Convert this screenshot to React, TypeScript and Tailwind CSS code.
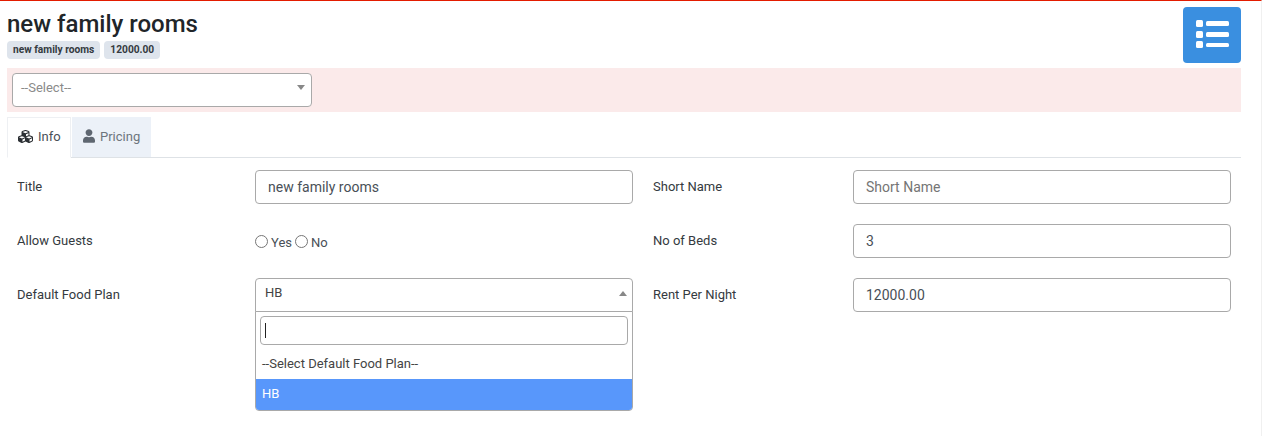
import { FaCubes, FaUser } from "react-icons/fa";

function Field({ label, labelW, value, placeholder }: { label: string; labelW: string; value?: string; placeholder?: string }) {
  return (
    <div className="flex items-center">
      <div className={`${labelW} text-[13px] text-[#343a40]`}>{label}</div>
      <input
        readOnly
        value={value ?? ""}
        placeholder={placeholder}
        className="w-[378px] h-[34px] border border-[#a9a9a9] rounded-[4px] px-3 text-[14px] text-[#495057] bg-white outline-none placeholder:text-[#757575]"
      />
    </div>
  );
}

export default function App() {
  return (
    <div className="w-[1262px] h-[436px] overflow-hidden bg-white border-t border-t-[#e31c00] border-r border-r-[#f0f0f0] font-['Roboto',sans-serif] text-[#212529]">
      <div className="pl-[7px] pr-[20px] pt-[6px]">
        <div className="flex justify-between h-[61px]">
          <div>
            <div className="text-[24px] leading-[34px] font-medium text-[#212529]">new family rooms</div>
            <div className="flex gap-[4px] mt-0">
              <span className="h-[18px] px-[6px] rounded-[4px] bg-[#dee4ec] text-[10.2px] leading-[18px] font-bold text-[#343a40]">new family rooms</span>
              <span className="h-[18px] px-[6px] rounded-[4px] bg-[#dee4ec] text-[10.2px] leading-[18px] font-bold text-[#343a40]">12000.00</span>
            </div>
          </div>
          <div className="w-[58px] h-[56px] rounded-[4px] bg-[#3a8fe0] flex items-center justify-center">
            <svg width="58" height="56" viewBox="0 0 58 56" fill="white">
              <rect x="13" y="13" width="7" height="7" rx="1.5" />
              <rect x="13" y="24" width="7" height="7" rx="1.5" />
              <rect x="13" y="34" width="7" height="7" rx="1.5" />
              <rect x="23" y="14" width="23" height="5" rx="1.5" />
              <rect x="23" y="25" width="23" height="5" rx="1.5" />
              <rect x="23" y="36" width="23" height="4" rx="1.5" />
            </svg>
          </div>
        </div>
        <div className="h-[44px] bg-[#fbeaea] px-[5px] py-[5px]">
          <div className="relative w-[300px] h-[34px] bg-white border border-[#a9a9a9] rounded-[4px] pl-[8px] text-[13px] leading-[27px] text-[#8a8a8a]">
            --Select--
            <span className="absolute right-[6px] top-[11px] w-0 h-0 border-x-[4px] border-x-transparent border-t-[5px] border-t-[#888888]"></span>
          </div>
        </div>
        <div className="flex mt-[5px] h-[41px] border-b border-b-[#dee2e6]">
          <div className="w-[64px] h-[41px] bg-white border border-[#eef0f3] border-b-white flex items-center pl-[10px] pb-[2px] gap-[5px] text-[13px] text-[#495057]">
            <FaCubes className="text-[15px] text-[#2b2f33]" />
            <span>Info</span>
          </div>
          <div className="w-[79px] h-[40px] ml-[1px] bg-[#ecf1f8] flex items-center pl-[11px] gap-[5px] text-[13px] text-[#6c757d]">
            <FaUser className="w-[12px] h-[14px] relative top-[-1px] text-[#5f6771]" />
            <span>Pricing</span>
          </div>
        </div>
        <div className="flex pl-[10px] pt-[12px] gap-[20px]">
          <div className="flex flex-col gap-[20px]">
            <Field label="Title" labelW="w-[238px]" value="new family rooms" />
            <div className="flex items-center h-[34px]">
              <div className="w-[238px] text-[13px] text-[#343a40]">Allow Guests</div>
              <div className="flex items-center text-[13px] text-[#495057]">
                <span className="w-[13px] h-[13px] rounded-full border border-[#767676] bg-white"></span>
                <span className="ml-[3px] mt-[4px]">Yes</span>
                <span className="w-[13px] h-[13px] ml-[3px] rounded-full border border-[#767676] bg-white"></span>
                <span className="ml-[3px] mt-[4px]">No</span>
              </div>
            </div>
            <div className="flex items-center relative">
              <div className="w-[238px] text-[13px] text-[#343a40]">Default Food Plan</div>
              <div className="relative w-[378px] h-[34px] bg-white border border-[#a9a9a9] rounded-t-[4px] pl-[9px] text-[13px] leading-[27px] text-[#444444]">
                HB
                <span className="absolute right-[5px] top-[12px] w-0 h-0 border-x-[4px] border-x-transparent border-b-[5px] border-b-[#888888]"></span>
                <div className="absolute left-[-1px] top-[32px] w-[378px] h-[100px] bg-white border border-[#a9a9a9] rounded-b-[4px] overflow-hidden">
                  <div className="p-[4px] h-[37px]">
                    <div className="h-[29px] border border-[#a9a9a9] rounded-[4px] flex items-center pl-[4px]">
                      <span className="w-[1px] h-[15px] bg-[#222222]"></span>
                    </div>
                  </div>
                  <div className="h-[30px] pl-[6px] text-[13px] leading-[30px] text-[#444444]">--Select Default Food Plan--</div>
                  <div className="h-[31px] pl-[6px] text-[13px] leading-[29px] bg-[#5897fb] text-white">HB</div>
                </div>
              </div>
            </div>
          </div>
          <div className="flex flex-col gap-[20px]">
            <Field label="Short Name" labelW="w-[200px]" placeholder="Short Name" />
            <Field label="No of Beds" labelW="w-[200px]" value="3" />
            <Field label="Rent Per Night" labelW="w-[200px]" value="12000.00" />
          </div>
        </div>
      </div>
    </div>
  );
}
